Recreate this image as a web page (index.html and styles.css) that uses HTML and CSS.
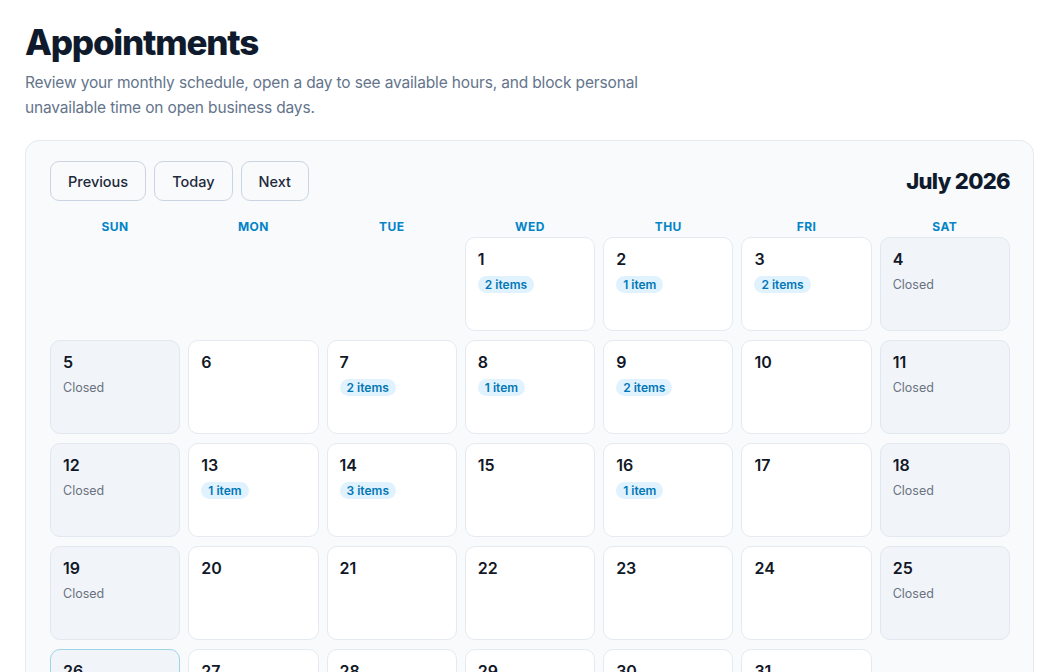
FILE: index.html
```html
<!DOCTYPE html>
<html lang="en">
<head>
<meta charset="utf-8">
<title>Appointments</title>
<link rel="stylesheet" href="styles.css">
</head>
<body>
<main class="page">
  <h1 class="title">Appointments</h1>
  <p class="subtitle">Review your monthly schedule, open a day to see available hours, and block personal unavailable time on open business days.</p>
  <section class="card">
    <div class="toolbar">
      <div class="nav">
        <button class="btn">Previous</button>
        <button class="btn">Today</button>
        <button class="btn">Next</button>
      </div>
      <h2 class="month">July 2026</h2>
    </div>
    <div class="weekdays">
      <div>SUN</div><div>MON</div><div>TUE</div><div>WED</div><div>THU</div><div>FRI</div><div>SAT</div>
    </div>
    <div class="grid">
      <div class="cell empty"></div>
      <div class="cell empty"></div>
      <div class="cell empty"></div>
      <div class="cell"><span class="num">1</span><span class="badge">2 items</span></div>
      <div class="cell"><span class="num">2</span><span class="badge">1 item</span></div>
      <div class="cell"><span class="num">3</span><span class="badge">2 items</span></div>
      <div class="cell closed"><span class="num">4</span><span class="note">Closed</span></div>

      <div class="cell closed"><span class="num">5</span><span class="note">Closed</span></div>
      <div class="cell"><span class="num">6</span></div>
      <div class="cell"><span class="num">7</span><span class="badge">2 items</span></div>
      <div class="cell"><span class="num">8</span><span class="badge">1 item</span></div>
      <div class="cell"><span class="num">9</span><span class="badge">2 items</span></div>
      <div class="cell"><span class="num">10</span></div>
      <div class="cell closed"><span class="num">11</span><span class="note">Closed</span></div>

      <div class="cell closed"><span class="num">12</span><span class="note">Closed</span></div>
      <div class="cell"><span class="num">13</span><span class="badge">1 item</span></div>
      <div class="cell"><span class="num">14</span><span class="badge">3 items</span></div>
      <div class="cell"><span class="num">15</span></div>
      <div class="cell"><span class="num">16</span><span class="badge">1 item</span></div>
      <div class="cell"><span class="num">17</span></div>
      <div class="cell closed"><span class="num">18</span><span class="note">Closed</span></div>

      <div class="cell closed"><span class="num">19</span><span class="note">Closed</span></div>
      <div class="cell"><span class="num">20</span></div>
      <div class="cell"><span class="num">21</span></div>
      <div class="cell"><span class="num">22</span></div>
      <div class="cell"><span class="num">23</span></div>
      <div class="cell"><span class="num">24</span></div>
      <div class="cell closed"><span class="num">25</span><span class="note">Closed</span></div>

      <div class="cell closed today"><span class="num">26</span><span class="note">Closed</span></div>
      <div class="cell"><span class="num">27</span></div>
      <div class="cell"><span class="num">28</span></div>
      <div class="cell"><span class="num">29</span></div>
      <div class="cell"><span class="num">30</span></div>
      <div class="cell"><span class="num">31</span></div>
      <div class="cell empty"></div>
    </div>
  </section>
</main>
</body>
</html>
```
FILE: styles.css
```css
* { box-sizing: border-box; }
html, body { margin: 0; background: #ffffff; }
body {
  font-family: Inter, "Noto Sans", "Liberation Sans", sans-serif;
  color: #0f172a;
}
.page {
  padding: 20px 29px 0 25px;
}
.title {
  margin: 0;
  font-size: 35px;
  line-height: 44px;
  font-weight: 800;
  letter-spacing: -0.035em;
  color: #0f1b2d;
}
.subtitle {
  margin: 6px 0 20px;
  max-width: 640px;
  font-size: 15.5px;
  line-height: 25px;
  color: #64748b;
  letter-spacing: -0.01em;
}
.card {
  background: #f8fafc;
  border: 1px solid #e5e9f0;
  border-radius: 14px;
  padding: 20px 23px 0 24px;
  height: 560px;
}
.toolbar {
  display: flex;
  align-items: center;
  justify-content: space-between;
  height: 40px;
}
.nav { display: flex; gap: 8px; }
.btn {
  font-family: Inter, "Noto Sans", sans-serif;
  font-size: 14.5px;
  font-weight: 500;
  color: #1e293b;
  background: #f8fafc;
  border: 1px solid #cbd5e1;
  border-radius: 9px;
  height: 40px;
  padding: 0 17px;
}
.month {
  margin: 0;
  font-size: 22px;
  font-weight: 800;
  letter-spacing: -0.03em;
  color: #0f1b2d;
}
.weekdays {
  display: grid;
  grid-template-columns: repeat(7, 1fr);
  column-gap: 8px;
  margin-top: 16px;
  height: 18px;
  align-items: center;
}
.weekdays div {
  text-align: center;
  font-size: 12px;
  font-weight: 700;
  letter-spacing: 0.04em;
  color: #0284c7;
}
.grid {
  display: grid;
  grid-template-columns: repeat(7, 1fr);
  grid-auto-rows: 94px;
  column-gap: 8px;
  row-gap: 9px;
  margin-top: 2px;
}
.cell {
  background: #ffffff;
  border: 1px solid #e5eaf0;
  border-radius: 10px;
  padding: 11px 12px;
  display: flex;
  flex-direction: column;
  align-items: flex-start;
}
.cell.empty { background: transparent; border: none; }
.cell.closed { background: #f1f5f9; border-color: #e2e8f0; }
.cell.today { border-color: #9fd3e8; }
.num {
  font-size: 16px;
  line-height: 20px;
  font-weight: 600;
  color: #111827;
}
.badge {
  margin-top: 7px;
  height: 17px;
  line-height: 17px;
  padding: 0 7px;
  border-radius: 999px;
  background: #e0f2fe;
  color: #0277b6;
  font-size: 12px;
  font-weight: 600;
}
.note {
  margin-top: 7px;
  font-size: 12.5px;
  line-height: 18px;
  color: #6b7280;
}
```
